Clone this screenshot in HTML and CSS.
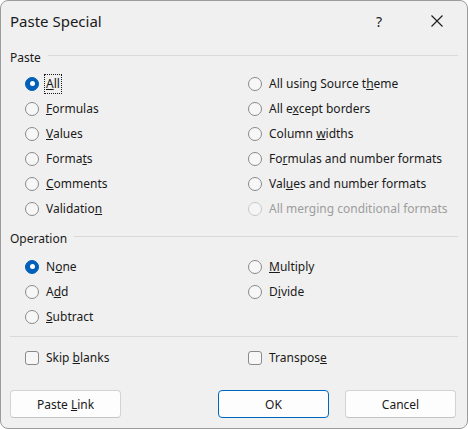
FILE: index.html
```html
<!DOCTYPE html>
<html>
<head>
<meta charset="utf-8">
<link rel="stylesheet" href="styles.css">
</head>
<body>
<div class="dialog">
  <div class="titlebar">
    <span class="title">Paste Special</span>
    <span class="help">?</span>
    <span class="close"><svg width="12" height="12" viewBox="0 0 12 12"><path d="M0.5 0.5 L11.5 11.5 M11.5 0.5 L0.5 11.5" stroke="#1a1a1a" stroke-width="1.1" fill="none"/></svg></span>
  </div>
  <div class="body">
    <div class="group-head"><span>Paste</span><i class="rule"></i></div>
    <div class="opts opts-paste">
      <label class="opt"><span class="radio on"></span><span class="lbl focus"><u>A</u>ll</span></label>
      <label class="opt"><span class="radio"></span><span class="lbl">All using Source t<u>h</u>eme</span></label>
      <label class="opt"><span class="radio"></span><span class="lbl"><u>F</u>ormulas</span></label>
      <label class="opt"><span class="radio"></span><span class="lbl">All e<u>x</u>cept borders</span></label>
      <label class="opt"><span class="radio"></span><span class="lbl"><u>V</u>alues</span></label>
      <label class="opt"><span class="radio"></span><span class="lbl">Column <u>w</u>idths</span></label>
      <label class="opt"><span class="radio"></span><span class="lbl">Forma<u>t</u>s</span></label>
      <label class="opt"><span class="radio"></span><span class="lbl">Fo<u>r</u>mulas and number formats</span></label>
      <label class="opt"><span class="radio"></span><span class="lbl"><u>C</u>omments</span></label>
      <label class="opt"><span class="radio"></span><span class="lbl">Val<u>u</u>es and number formats</span></label>
      <label class="opt"><span class="radio"></span><span class="lbl">Validatio<u>n</u></span></label>
      <label class="opt disabled"><span class="radio"></span><span class="lbl">All merging conditional formats</span></label>
    </div>
    <div class="group-head op"><span>Operation</span><i class="rule"></i></div>
    <div class="opts opts-op">
      <label class="opt"><span class="radio on"></span><span class="lbl">N<u>o</u>ne</span></label>
      <label class="opt"><span class="radio"></span><span class="lbl"><u>M</u>ultiply</span></label>
      <label class="opt"><span class="radio"></span><span class="lbl">A<u>d</u>d</span></label>
      <label class="opt"><span class="radio"></span><span class="lbl">D<u>i</u>vide</span></label>
      <label class="opt"><span class="radio"></span><span class="lbl"><u>S</u>ubtract</span></label>
    </div>
    <div class="sep"></div>
    <div class="opts opts-check">
      <label class="opt"><span class="check"></span><span class="lbl">Skip <u>b</u>lanks</span></label>
      <label class="opt"><span class="check"></span><span class="lbl">Transpos<u>e</u></span></label>
    </div>
    <div class="buttons">
      <button class="btn">Paste <u>L</u>ink</button>
      <span class="spacer"></span>
      <button class="btn default">OK</button>
      <button class="btn">Cancel</button>
    </div>
  </div>
</div>
</body>
</html>
```
FILE: styles.css
```css
html, body {
  margin: 0;
  padding: 0;
  background: #ffffff;
}
.dialog {
  width: 468px;
  height: 429px;
  box-sizing: border-box;
  border: 1px solid #9c9c9c;
  border-radius: 8px;
  background: #f0f0f0;
  font-family: "Noto Sans", "Open Sans", sans-serif;
  font-size: 12px;
  color: #1a1a1a;
  overflow: hidden;
}
.titlebar {
  height: 40px;
  display: flex;
  align-items: center;
  padding-left: 9px;
}
.title {
  font-size: 15px;
  flex: 1;
}
.help {
  font-size: 14px;
  width: 20px;
  text-align: center;
  margin-right: 42px;
}
.close {
  width: 12px;
  height: 12px;
  display: flex;
  margin-right: 24px;
}
.body {
  padding: 0 11px 0 9px;
}
.group-head {
  display: flex;
  align-items: center;
  height: 16px;
  margin-top: 8px;
  margin-right: -2px;
}
.group-head.op {
  margin-top: 9px;
}
.group-head .rule {
  flex: 1;
  height: 1px;
  background: #d9d9d9;
  margin-left: 7px;
  margin-top: -3px;
}
.opts {
  display: grid;
  grid-template-columns: 223px 1fr;
  grid-auto-rows: 25px;
  padding-left: 15px;
}
.opts-paste {
  margin-top: 6px;
}
.opts-op {
  margin-top: 8px;
}
.opt {
  display: flex;
  align-items: center;
}
.radio {
  width: 12px;
  height: 12px;
  border: 1px solid #8a8a8a;
  border-radius: 50%;
  background: #f7f7f7;
  margin-right: 7px;
  flex: none;
  position: relative;
}
.radio.on {
  background: #005fb8;
  border-color: #005fb8;
}
.radio.on::after {
  content: "";
  position: absolute;
  left: 3.5px;
  top: 3.5px;
  width: 5px;
  height: 5px;
  border-radius: 50%;
  background: #ffffff;
}
.disabled .radio {
  border-color: #c8c8c8;
  background: #f5f5f5;
}
.disabled .lbl {
  color: #9d9d9d;
}
.lbl {
  white-space: nowrap;
  line-height: 16px;
}
.lbl.focus {
  outline: 1px dotted #1a1a1a;
  outline-offset: 1px;
}
.sep {
  height: 1px;
  background: #d9d9d9;
  margin-top: 7px;
  margin-right: -2px;
}
.opts-check {
  margin-top: 8px;
}
.check {
  width: 12px;
  height: 12px;
  border: 1px solid #8a8a8a;
  border-radius: 3px;
  background: #f7f7f7;
  margin-right: 7px;
  flex: none;
}
.buttons {
  display: flex;
  margin-top: 20px;
}
.spacer {
  flex: 1;
}
.btn {
  width: 111px;
  height: 28px;
  box-sizing: border-box;
  border: 1px solid #d3d3d3;
  border-bottom-color: #c4c4c4;
  border-radius: 4px;
  background: #fdfdfd;
  font-family: "Noto Sans", "Open Sans", sans-serif;
  font-size: 12px;
  color: #1a1a1a;
  padding: 0;
}
.btn.default {
  border-color: #0067c0;
  margin-right: 16px;
}
```
